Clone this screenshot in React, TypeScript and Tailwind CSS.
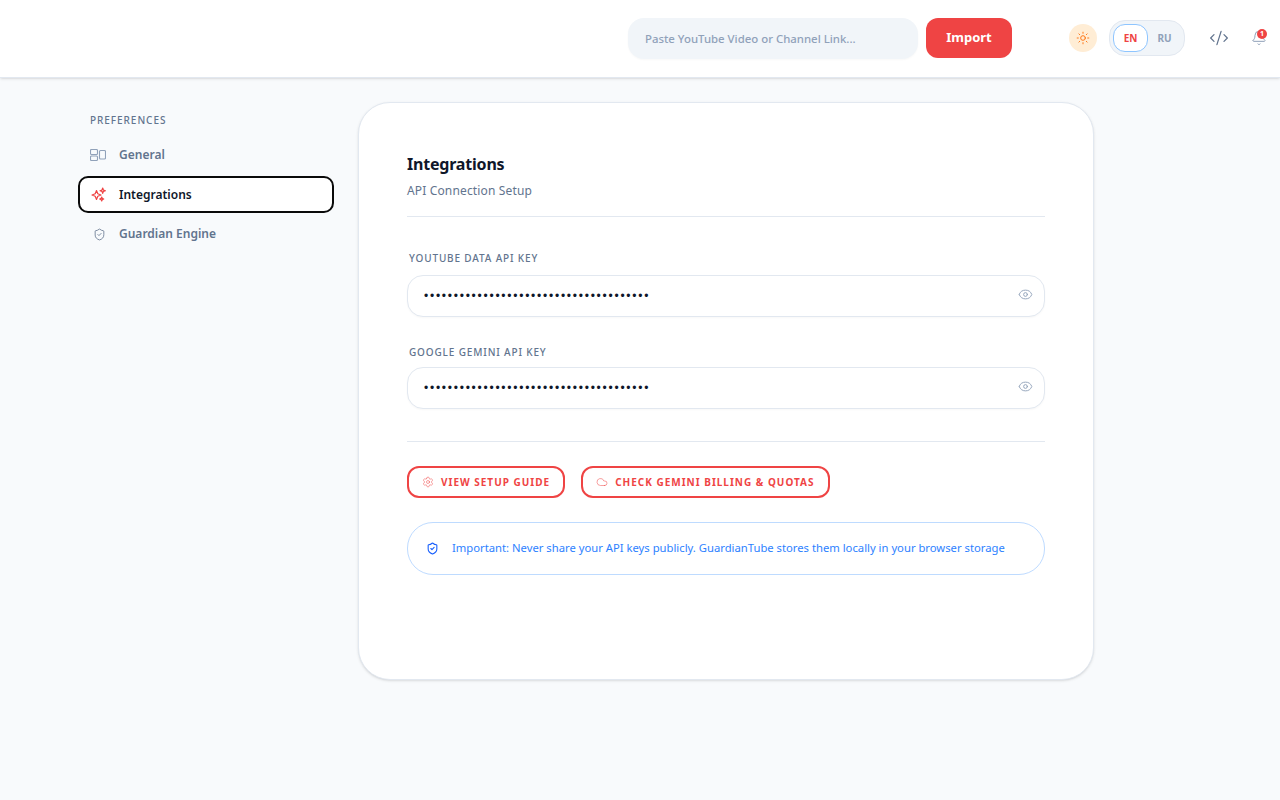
import { CodeXml, Bell, Sun, Eye, ShieldCheck, Settings, Cloud } from "lucide-react";

const dots = "••••••••••••••••••••••••••••••••••••••";

const GeneralIcon = () => (
  <svg width="16" height="12" viewBox="0 0 16 12" fill="none" stroke="currentColor" strokeWidth="1.1" className="text-slate-400">
    <rect x="0.5" y="0.5" width="7" height="5" rx="1" />
    <rect x="0.5" y="7" width="7" height="4.5" rx="1" />
    <rect x="9.5" y="1.5" width="6" height="8.5" rx="1" />
  </svg>
);

const SparkIcon = () => (
  <svg width="16" height="16" viewBox="0 0 16 16" fill="none" stroke="currentColor" strokeWidth="1.2" strokeLinejoin="round" className="text-[#ef4444]">
    <path d="M6.5 3.5 L7.8 6.7 L11 8 L7.8 9.3 L6.5 12.5 L5.2 9.3 L2 8 L5.2 6.7 Z" />
    <path d="M12.7 1 L13.4 3 L15.4 3.7 L13.4 4.4 L12.7 6.4 L12 4.4 L10 3.7 L12 3 Z" />
    <path d="M11.7 10 L12.3 11.4 L13.7 12 L12.3 12.6 L11.7 14 L11.1 12.6 L9.7 12 L11.1 11.4 Z" />
  </svg>
);

const KeyField = ({ label, labelGap }: { label: string; labelGap: string }) => {
  return (
    <div>
      <p className={"ml-0.5 text-[10px] leading-[15px] font-medium tracking-[0.85px] text-slate-500 " + labelGap}>{label}</p>
      <div className="h-[42px] flex items-center justify-between pl-4 pr-[11px] bg-white border border-slate-200 rounded-2xl shadow-[0_1px_2px_rgba(0,0,0,0.03)]">
        <span className="text-xs leading-none tracking-[1.75px] text-[#0f172a] font-['Liberation_Sans',sans-serif]">{dots}</span>
        <Eye className="w-[15px] h-[15px] text-slate-400 -mt-1" strokeWidth={1.5} />
      </div>
    </div>
  );
};

export default function App() {
  return (
    <div className="min-h-[800px] bg-[#f8fafc] font-['Noto_Sans',sans-serif]">
      <header className="h-[78px] bg-white border-b border-slate-200 shadow-sm flex items-start pt-[18px] pl-[628px]">
        <div className="w-[290px] h-[41px] flex items-center px-[17px] bg-[#f1f5f9] rounded-2xl shadow-[0_1px_2px_rgba(0,0,0,0.03)] text-[11.4px] font-medium text-slate-400">
          Paste YouTube Video or Channel Link...
        </div>
        <button className="ml-2 w-[86px] h-10 rounded-xl bg-[#ef4444] text-white text-[13px] font-bold">Import</button>
        <div className="ml-[57px] mt-[6px] w-7 h-7 rounded-full bg-[#ffedd5] flex items-center justify-center">
          <Sun className="w-[14px] h-[14px] text-orange-500" strokeWidth={1.5} />
        </div>
        <div className="ml-[12px] mt-[2px] w-[76px] h-9 p-[3px] rounded-2xl bg-[#f1f5f9] border border-slate-200 flex items-center">
          <div className="w-[35px] h-7 rounded-xl bg-white border border-blue-300 flex items-center justify-center text-[10px] font-bold text-[#ef4444]">EN</div>
          <div className="flex-1 text-center text-[10px] font-bold text-slate-400">RU</div>
        </div>
        <CodeXml className="ml-[24px] mt-[10px] w-5 h-5 text-slate-500" strokeWidth={1.5} />
        <div className="relative ml-[22px] mt-[12px] w-4 h-4">
          <Bell className="w-4 h-4 text-slate-400" strokeWidth={1.5} />
          <span className="absolute -top-[1px] left-[6px] w-[10px] h-[10px] rounded-full bg-[#ef4444] text-white text-[7px] leading-[10px] font-bold text-center">1</span>
        </div>
      </header>

      <main className="flex items-start gap-6 pl-[78px] pt-6">
        <aside className="w-64 pt-[11px]">
          <p className="ml-3 text-[10px] leading-[15px] font-medium tracking-[0.95px] text-slate-500">PREFERENCES</p>
          <nav className="mt-[9px] flex flex-col gap-[3px]">
            <div className="h-9 flex items-center gap-[13px] px-3 text-xs font-semibold text-slate-500">
              <GeneralIcon />
              General
            </div>
            <div className="h-[37px] flex items-center gap-[13px] px-[10px] bg-white border-2 border-[#0a0a0a] rounded-[10px] text-xs font-semibold text-[#0f172a]">
              <SparkIcon />
              Integrations
            </div>
            <div className="h-9 flex items-center gap-[13px] px-3 text-xs font-semibold text-slate-500">
              <span className="w-4 flex justify-center pl-[2px]">
                <ShieldCheck className="w-[13px] h-[13px] text-slate-500" strokeWidth={1.5} />
              </span>
              Guardian Engine
            </div>
          </nav>
        </aside>

        <section className="w-[736px] h-[578px] bg-white border border-slate-200 rounded-[32px] shadow-sm pt-[49px] px-12">
          <div className="pb-[17px] border-b border-slate-200">
            <h2 className="text-base leading-6 font-bold tracking-[-0.2px] text-[#0f172a]">Integrations</h2>
            <p className="mt-[7px] text-xs leading-4 tracking-[0.15px] text-slate-500">API Connection Setup</p>
          </div>
          <div className="mt-[34px] flex flex-col gap-[28px]">
            <KeyField label="YOUTUBE DATA API KEY" labelGap="mb-[9px]" />
            <KeyField label="GOOGLE GEMINI API KEY" labelGap="mb-[7px]" />
          </div>
          <div className="mt-8 pt-6 border-t border-slate-200 flex gap-4">
            <button className="h-8 flex items-center gap-[7px] px-[13px] border-2 border-[#ef4444] rounded-xl text-[10px] font-bold tracking-[1px] text-[#ef4444]">
              <Settings className="w-3 h-3" strokeWidth={1} />
              VIEW SETUP GUIDE
            </button>
            <button className="h-8 flex items-center gap-[7px] px-[13px] border-2 border-[#ef4444] rounded-xl text-[10px] font-bold tracking-[1px] text-[#ef4444]">
              <Cloud className="w-3 h-3" strokeWidth={1} />
              CHECK GEMINI BILLING &amp; QUOTAS
            </button>
          </div>
          <div className="mt-6 h-[53px] flex items-center gap-[13px] px-[18px] bg-white border border-blue-200 rounded-[26px] text-[11.25px] text-blue-500">
            <ShieldCheck className="w-[13px] h-[13px] text-blue-600" strokeWidth={2} />
            Important: Never share your API keys publicly. GuardianTube stores them locally in your browser storage
          </div>
        </section>
      </main>
    </div>
  );
}
